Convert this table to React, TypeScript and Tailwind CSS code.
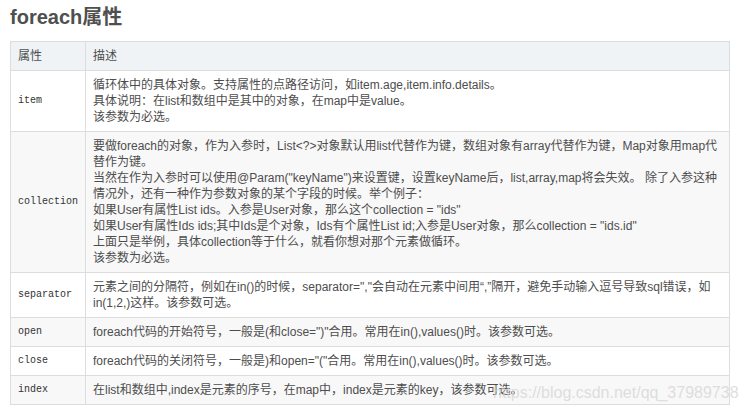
const rows: { name: string; lines: string[] }[] = [
  {
    name: 'item',
    lines: [
      '循环体中的具体对象。支持属性的点路径访问，如item.age,item.info.details。',
      '具体说明：在list和数组中是其中的对象，在map中是value。',
      '该参数为必选。',
    ],
  },
  {
    name: 'collection',
    lines: [
      '要做foreach的对象，作为入参时，List<?>对象默认用list代替作为键，数组对象有array代替作为键，Map对象用map代',
      '替作为键。',
      '当然在作为入参时可以使用@Param("keyName")来设置键，设置keyName后，list,array,map将会失效。 除了入参这种',
      '情况外，还有一种作为参数对象的某个字段的时候。举个例子：',
      '如果User有属性List ids。入参是User对象，那么这个collection = "ids"',
      '如果User有属性Ids ids;其中Ids是个对象，Ids有个属性List id;入参是User对象，那么collection = "ids.id"',
      '上面只是举例，具体collection等于什么，就看你想对那个元素做循环。',
      '该参数为必选。',
    ],
  },
  {
    name: 'separator',
    lines: [
      '元素之间的分隔符，例如在in()的时候，separator=","会自动在元素中间用“,”隔开，避免手动输入逗号导致sql错误，如',
      'in(1,2,)这样。该参数可选。',
    ],
  },
  { name: 'open', lines: ['foreach代码的开始符号，一般是(和close=")"合用。常用在in(),values()时。该参数可选。'] },
  { name: 'close', lines: ['foreach代码的关闭符号，一般是)和open="("合用。常用在in(),values()时。该参数可选。'] },
  { name: 'index', lines: ['在list和数组中,index是元素的序号，在map中，index是元素的key，该参数可选。'] },
]

export default function App() {
  return (
    <div
      className="relative h-[410px] w-[747px] bg-white px-[10px] pt-[3px] text-[#4d4d4d]"
      style={{ fontFamily: '"Liberation Sans", "Noto Sans CJK SC", sans-serif' }}
    >
      <h3 className="h-[38px] text-[20px] font-bold leading-[28px] text-[#4f4f4f]">foreach属性</h3>

      <table className="w-[720px] border-collapse border border-[#dddddd] text-[12px] leading-[16px]">
        <thead>
          <tr className="bg-[#eff3f5]">
            <th className="w-[73px] border border-[#dddddd] px-[7px] py-[6px] text-left font-normal">属性</th>
            <th className="border border-[#dddddd] px-[7px] py-[6px] text-left font-normal">描述</th>
          </tr>
        </thead>
        <tbody>
          {rows.map((r, i) => (
            <tr key={r.name} className={i % 2 === 1 ? 'bg-[#f8f8f8]' : 'bg-white'}>
              <td
                className="border border-[#dddddd] px-[7px] py-[6px] align-middle text-[10px] text-[#333]"
                style={{ fontFamily: '"Liberation Mono", monospace' }}
              >
                {r.name}
              </td>
              <td className="border border-[#dddddd] px-[7px] py-[6px] align-middle">
                {r.lines.map((l, j) => (
                  <div key={j} className="whitespace-pre">
                    {l}
                  </div>
                ))}
              </td>
            </tr>
          ))}
        </tbody>
      </table>

      {/* CSDN 水印 */}
      <div className="pointer-events-none absolute left-[493px] top-[383px] text-[16px] leading-[20px] text-[#d6d6d6]/80">
        https://blog.csdn.net/qq_37989738
      </div>
    </div>
  )
}
